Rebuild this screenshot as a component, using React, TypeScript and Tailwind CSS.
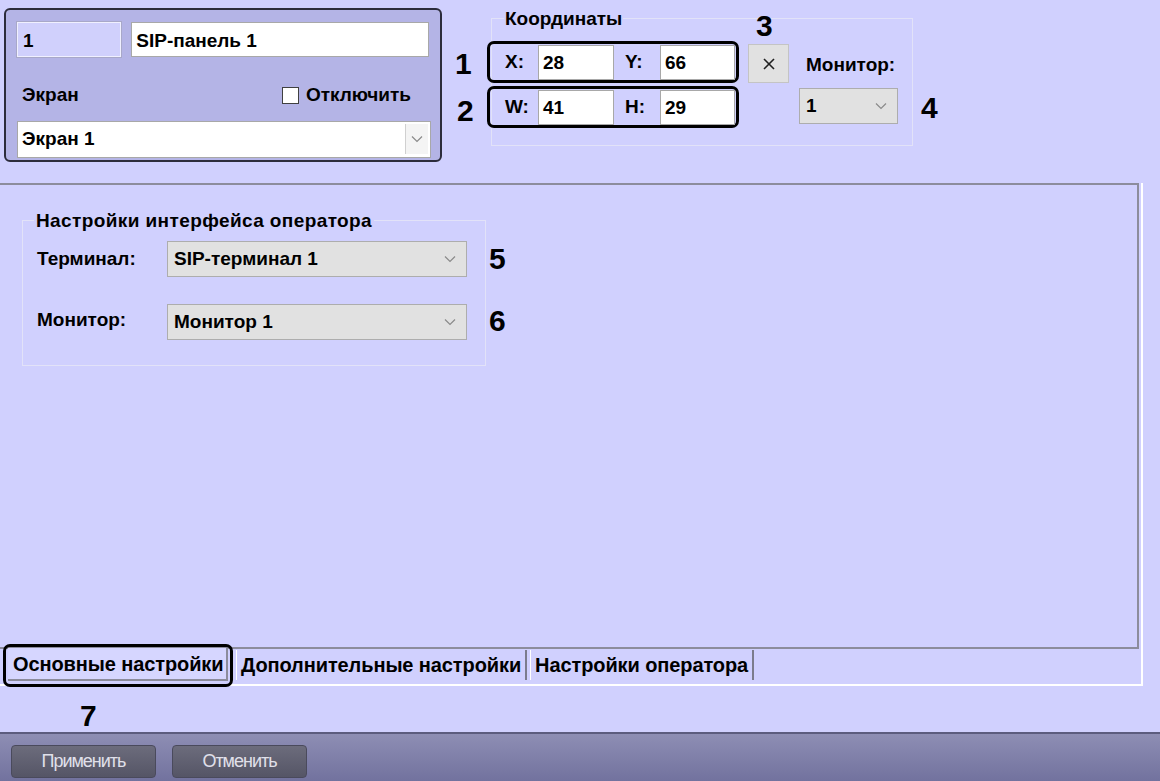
import React from "react";

const Chevron = () => (
  <svg width="12" height="8" viewBox="0 0 12 8">
    <polyline points="1,1.5 6,6.5 11,1.5" fill="none" stroke="#8a8a8a" strokeWidth="1.2" />
  </svg>
);

// big annotation digits drawn over the screenshot
const Badge = ({ n, className }: { n: string; className: string }) => (
  <span className={`absolute text-[30px] leading-none font-bold text-black ${className}`}>{n}</span>
);

function Select({ value, className }: { value: string; className: string }) {
  return (
    <div className={`flex items-center justify-between bg-[#e1e1e1] border border-[#adadad] pl-[6px] pr-[10px] ${className}`}>
      <span className="text-[19px] font-bold">{value}</span>
      <Chevron />
    </div>
  );
}

function CoordRow({ a, av, b, bv }: { a: string; av: string; b: string; bv: string }) {
  return (
    <div className="ml-[-5px] w-[252px] h-[42px] border-[3px] border-black rounded-[7px] flex items-center">
      <span className="w-[48px] pl-[15px] text-[19px] font-bold">{a}</span>
      <div className="w-[76px] h-[35px] bg-white border border-[#a8a8a8] px-[4px] pt-[3px] text-[19px] font-bold">{av}</div>
      <span className="w-[46px] pl-[11px] text-[19px] font-bold">{b}</span>
      <div className="w-[75px] h-[35px] bg-white border border-[#a8a8a8] px-[4px] pt-[3px] text-[19px] font-bold">{bv}</div>
    </div>
  );
}

export default function App() {
  return (
    <div className="w-[1160px] h-[781px] overflow-hidden bg-[#d0d0fe] flex flex-col text-black font-['Liberation_Sans',Arial,sans-serif]">
      {/* top area */}
      <div className="h-[183px] shrink-0 flex items-start">
        {/* object panel */}
        <div className="ml-[4px] mt-[8px] w-[438px] h-[154px] bg-[#b4b4e6] border-2 border-[#2c2c3c] rounded-[6px] px-[11px] pt-[12px]">
          <div className="flex gap-[10px]">
            <div className="w-[105px] h-[35px] bg-[#d0d0fc] border border-[#f0f0ff] outline outline-1 outline-[#a8a8c8] px-[5px] pt-[4px] text-[19px] font-bold">1</div>
            <div className="w-[300px] h-[35px] bg-white border border-[#a8a8a8] px-[4px] pt-[4px] text-[19px] font-bold">SIP-панель 1</div>
          </div>
          <div className="flex items-center justify-between mt-[24px] pl-[5px] pr-[18px]">
            <span className="text-[19px] font-bold">Экран</span>
            <div className="flex items-center gap-[7px]">
              <div className="w-[17px] h-[17px] bg-white border border-[#404040]" />
              <span className="text-[19px] font-bold">Отключить</span>
            </div>
          </div>
          <div className="mt-[11px] w-[414px] h-[37px] bg-white border border-[#a8a8a8] flex items-center justify-between pl-[4px] pr-[2px]">
            <span className="text-[19px] font-bold">Экран 1</span>
            <div className="w-[23px] h-[30px] border-l border-[#d0d0d0] bg-[#f4f4f4] flex items-center justify-center">
              <Chevron />
            </div>
          </div>
        </div>

        {/* coordinates */}
        <div className="relative ml-[49px] mt-[18px] w-[422px] h-[128px] border border-[#e2e2f8]">
          <span className="absolute left-[12px] top-[-10px] px-[1px] bg-[#d0d0fe] text-[19px] font-bold leading-none">Координаты</span>
          <Badge n="1" className="left-[-37px] top-[30px]" />
          <Badge n="2" className="left-[-35px] top-[77px]" />
          <Badge n="3" className="left-[264px] top-[-8px]" />
          <Badge n="4" className="left-[429px] top-[74px]" />
          <div className="flex">
            <div className="flex flex-col gap-[3px] pt-[22px]">
              <CoordRow a="X:" av="28" b="Y:" bv="66" />
              <CoordRow a="W:" av="41" b="H:" bv="29" />
            </div>
            <div className="flex flex-col">
              <div className="flex items-start mt-[25px]">
                <div className="ml-[9px] w-[41px] h-[39px] bg-[#e1e1e1] border border-[#c4c4c4] flex items-center justify-center">
                  <svg width="12" height="12" viewBox="0 0 12 12">
                    <line x1="1" y1="1" x2="11" y2="11" stroke="#202020" strokeWidth="1.6" />
                    <line x1="11" y1="1" x2="1" y2="11" stroke="#202020" strokeWidth="1.6" />
                  </svg>
                </div>
                <span className="ml-[17px] mt-[7px] text-[19px] font-bold">Монитор:</span>
              </div>
              <Select value="1" className="ml-[60px] mt-[5px] w-[99px] h-[36px]" />
            </div>
          </div>
        </div>
      </div>

      {/* tab control */}
      <div className="w-[1143px] h-[503px] shrink-0 flex flex-col border-r-2 border-b-2 border-white">
        <div className="w-[1139px] flex-1 border-t-2 border-r-2 border-b-2 border-[#8c8c9c]">
          <div className="relative ml-[22px] mt-[35px] w-[464px] h-[146px] border border-[#e2e2f8]">
            <span className="absolute left-[11px] top-[-10px] px-[2px] bg-[#d0d0fe] text-[19px] font-bold leading-none tracking-[0.4px]">Настройки интерфейса оператора</span>
            <Badge n="5" className="left-[466px] top-[23px]" />
            <Badge n="6" className="left-[466px] top-[85px]" />
            <div className="flex items-center mt-[20px]">
              <span className="w-[144px] pl-[14px] text-[19px] font-bold">Терминал:</span>
              <Select value="SIP-терминал 1" className="w-[300px] h-[36px]" />
            </div>
            <div className="flex items-center mt-[27px]">
              <span className="w-[144px] pl-[14px] text-[19px] font-bold -mt-[4px]">Монитор:</span>
              <Select value="Монитор 1" className="w-[300px] h-[36px]" />
            </div>
          </div>
        </div>
        <div className="h-[35px] flex items-start relative">
          <div className="relative ml-[3px] -mt-[5px] w-[230px] h-[43px] border-[3px] border-black rounded-[7px] p-[2px]">
            <div className="h-[33px] -mt-[1px] bg-[#d6d6ff] border-r-2 border-b-2 border-[#8c8c9c] flex items-center pl-[5px] text-[20px] font-bold tracking-[-0.1px]">Основные настройки</div>
          </div>
          <div className="ml-[3px] mt-[1px] h-[30px] border-l border-white border-r-2 border-r-[#7c7c8c] flex items-center px-[4px] text-[20px] font-bold tracking-[-0.1px]">Дополнительные настройки</div>
          <div className="ml-[3px] mt-[1px] h-[30px] border-l border-white border-r-2 border-r-[#7c7c8c] flex items-center px-[4px] text-[20px] font-bold tracking-[-0.1px]">Настройки оператора</div>
        </div>
      </div>

      {/* annotation 7 */}
      <div className="h-[46px] shrink-0 pl-[80px] pt-[15px]">
        <span className="text-[30px] leading-none font-bold">7</span>
      </div>

      {/* bottom bar */}
      <div className="flex-1 border-t-2 border-[#5c5c7e] bg-gradient-to-b from-[#8e8eb4] to-[#72729e] flex items-start gap-[16px] pl-[11px] pt-[11px]">
        <button className="w-[145px] h-[33px] rounded-[4px] border border-[#4a4a5c] bg-gradient-to-b from-[#6c6c7c] to-[#555566] text-[18px] tracking-[-1px] text-[#e0e0ea]">Применить</button>
        <button className="w-[135px] h-[33px] rounded-[4px] border border-[#4a4a5c] bg-gradient-to-b from-[#6c6c7c] to-[#555566] text-[18px] tracking-[-1px] text-[#e0e0ea]">Отменить</button>
      </div>
    </div>
  );
}
